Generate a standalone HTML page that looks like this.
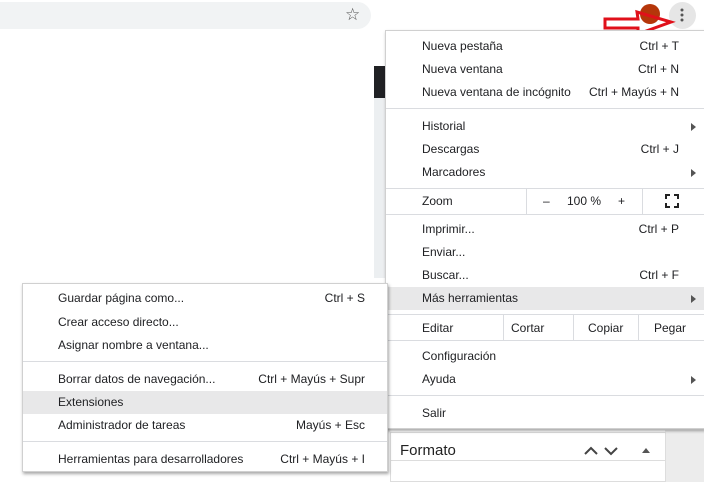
<!DOCTYPE html>
<html><head><meta charset="utf-8"><style>
*{margin:0;padding:0;box-sizing:border-box}
body{width:704px;height:482px;overflow:hidden;background:#fff;position:relative;font-family:"Liberation Sans",sans-serif;font-size:12px;color:#202124}
.abs{position:absolute}
.menu{position:absolute;background:#fff;border:1px solid #d0d0d0;box-shadow:1px 2px 3px rgba(0,0,0,.35)}
.it{position:absolute;left:0;right:0;height:23px;line-height:23px}
.it .l{position:absolute}
.it .r{position:absolute;text-align:right}
.sep{position:absolute;left:0;right:0;height:1px;background:#dadce0}
.hl{background:#e8e8e9}
.tri{position:absolute;width:0;height:0;border-left:5px solid #555;border-top:4px solid transparent;border-bottom:4px solid transparent}
.vd{position:absolute;width:1px;background:#dadce0}
</style></head><body>
<div class="abs" style="left:0;top:2px;width:371px;height:27px;background:#f1f3f4;border-radius:0 14px 14px 0"></div>
<div class="abs" style="left:345px;top:5px;font-size:17px;color:#555">☆</div>
<div class="abs" style="left:374px;top:66px;width:12px;height:32px;background:#202124"></div>
<div class="abs" style="left:374px;top:98px;width:12px;height:180px;background:#eceff1"></div>
<div class="abs" style="left:665px;top:430px;width:39px;height:52px;background:#ececec"></div>
<div class="abs" style="left:390px;top:432px;width:276px;height:50px;background:#fff;border:1px solid #ddd"></div>
<div class="abs" style="left:390px;top:460px;width:276px;height:1px;background:#ddd"></div>
<div class="abs" style="left:400px;top:442px;font-size:15px;color:#222">Formato</div>
<svg class="abs" style="left:580px;top:444px" width="80" height="14"><path d="M5 10 L11 4 L17 10 M25 4 L31 10 L37 4" stroke="#444" stroke-width="2" fill="none"/><path d="M62 9 L66 4 L70 9Z" fill="#555"/></svg>
<div class="abs" style="left:640px;top:4px;width:20px;height:20px;border-radius:50%;background:#b5360a"></div>
<div class="abs" style="left:669px;top:2px;width:27px;height:27px;border-radius:50%;background:#e6e6e6"></div>
<svg class="abs" style="left:679px;top:7px" width="6" height="16"><circle cx="3" cy="3" r="1.5" fill="#555"/><circle cx="3" cy="8" r="1.5" fill="#555"/><circle cx="3" cy="13" r="1.5" fill="#555"/></svg>
<svg class="abs" style="left:600px;top:8px" width="80" height="30"><path d="M5 11 L38 11 L37 4 L71 14 L38 26 L38 20 L5 20 Z" fill="none" stroke="#e0101a" stroke-width="3"/></svg>

<div class="menu" style="left:385px;top:30px;width:320px;height:399px">
 <div class="it" style="top:4px"><span class="l" style="left:36px">Nueva pestaña</span><span class="r" style="right:25px">Ctrl + T</span></div>
 <div class="it" style="top:27px"><span class="l" style="left:36px">Nueva ventana</span><span class="r" style="right:25px">Ctrl + N</span></div>
 <div class="it" style="top:50px"><span class="l" style="left:36px">Nueva ventana de incógnito</span><span class="r" style="right:25px">Ctrl + Mayús + N</span></div>
 <div class="sep" style="top:77px"></div>
 <div class="it" style="top:84px"><span class="l" style="left:36px">Historial</span></div><div class="tri" style="left:305px;top:92px"></div>
 <div class="it" style="top:107px"><span class="l" style="left:36px">Descargas</span><span class="r" style="right:25px">Ctrl + J</span></div>
 <div class="it" style="top:130px"><span class="l" style="left:36px">Marcadores</span></div><div class="tri" style="left:305px;top:138px"></div>
 <div class="sep" style="top:157px"></div>
 <div class="it" style="top:159px"><span class="l" style="left:36px">Zoom</span><span class="l" style="left:157px">–</span><span class="l" style="left:181px">100 %</span><span class="l" style="left:232px">+</span></div>
 <div class="vd" style="left:140px;top:157px;height:26px"></div><div class="vd" style="left:256px;top:157px;height:26px"></div>
 <svg class="abs" style="left:279px;top:163px" width="14" height="14"><path d="M1 5V1H5M9 1H13V5M13 9V13H9M5 13H1V9" stroke="#222" stroke-width="2" fill="none"/></svg>
 <div class="sep" style="top:183px"></div>
 <div class="it" style="top:187px"><span class="l" style="left:36px">Imprimir...</span><span class="r" style="right:25px">Ctrl + P</span></div>
 <div class="it" style="top:210px"><span class="l" style="left:36px">Enviar...</span></div>
 <div class="it" style="top:233px"><span class="l" style="left:36px">Buscar...</span><span class="r" style="right:25px">Ctrl + F</span></div>
 <div class="it hl" style="top:256px"><span class="l" style="left:36px">Más herramientas</span></div><div class="tri" style="left:305px;top:264px"></div>
 <div class="sep" style="top:283px"></div>
 <div class="it" style="top:286px"><span class="l" style="left:36px">Editar</span><span class="l" style="left:125px">Cortar</span><span class="l" style="left:202px">Copiar</span><span class="l" style="left:268px">Pegar</span></div>
 <div class="vd" style="left:117px;top:283px;height:26px"></div><div class="vd" style="left:187px;top:283px;height:26px"></div><div class="vd" style="left:252px;top:283px;height:26px"></div>
 <div class="sep" style="top:309px"></div>
 <div class="it" style="top:314px"><span class="l" style="left:36px">Configuración</span></div>
 <div class="it" style="top:337px"><span class="l" style="left:36px">Ayuda</span></div><div class="tri" style="left:305px;top:345px"></div>
 <div class="sep" style="top:364px"></div>
 <div class="it" style="top:371px"><span class="l" style="left:36px">Salir</span></div>
</div>

<div class="menu" style="left:22px;top:283px;width:366px;height:189px">
 <div class="it" style="top:3px"><span class="l" style="left:35px">Guardar página como...</span><span class="r" style="right:22px">Ctrl + S</span></div>
 <div class="it" style="top:27px"><span class="l" style="left:35px">Crear acceso directo...</span></div>
 <div class="it" style="top:50px"><span class="l" style="left:35px">Asignar nombre a ventana...</span></div>
 <div class="sep" style="top:77px"></div>
 <div class="it" style="top:84px"><span class="l" style="left:35px">Borrar datos de navegación...</span><span class="r" style="right:22px">Ctrl + Mayús + Supr</span></div>
 <div class="it hl" style="top:107px"><span class="l" style="left:35px">Extensiones</span></div>
 <div class="it" style="top:130px"><span class="l" style="left:35px">Administrador de tareas</span><span class="r" style="right:22px">Mayús + Esc</span></div>
 <div class="sep" style="top:157px"></div>
 <div class="it" style="top:164px"><span class="l" style="left:35px">Herramientas para desarrolladores</span><span class="r" style="right:22px">Ctrl + Mayús + I</span></div>
</div>
</body></html>
